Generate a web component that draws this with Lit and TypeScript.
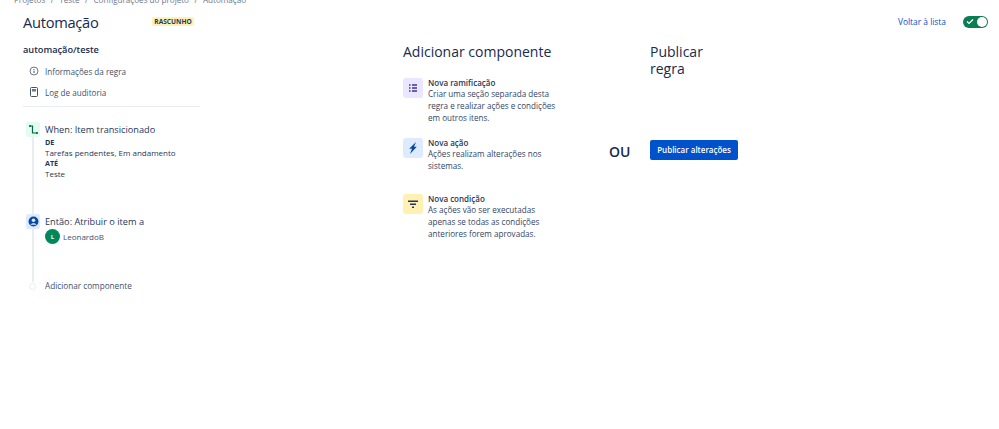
import { LitElement, html, css } from "lit";
import { customElement } from "lit/decorators.js";

@customElement("app-root")
export class AppRoot extends LitElement {
  static styles = css`
    :host { display: block; width: 999px; height: 429px; overflow: hidden; background: #fff; font-family: "Open Sans", "Noto Sans", sans-serif; color: #172b4d; font-size: 9px; }
    * { box-sizing: border-box; }
    .crumbs { display: flex; gap: 5.5px; margin: -6px 0 0 14px; height: 11px; line-height: 11px; font-size: 8.1px; color: #6b778c; white-space: nowrap; }
    .head { display: flex; align-items: center; height: 32px; padding: 0 11px 0 23px; margin-top: 1px; }
    h1 { margin: 0; width: 129px; font-size: 14.7px; font-weight: 400; letter-spacing: -0.3px; line-height: 22px; color: #172b4d; }
    .badge { background: #fff0b3; color: #253858; font-size: 6.6px; font-weight: 700; line-height: 9px; height: 9px; border-radius: 2px; margin-top: -2px; width: 42px; text-align: center; white-space: nowrap; }
    .back { margin-left: auto; color: #0052cc; font-size: 8.4px; margin-right: 17px; margin-top: -1px; }
    .toggle { width: 25px; height: 12px; border-radius: 6px; background: #0a7d55; display: flex; align-items: center; justify-content: space-between; padding: 0 1px 0 3px; margin-top: -1px; }
    .toggle i { width: 10px; height: 10px; background: #fff; border-radius: 50%; display: block; }
    .body { display: flex; padding-left: 23px; }
    .left { width: 177px; margin-right: 203px; }
    .name { font-size: 9.2px; font-weight: 600; line-height: 14px; margin-top: 5px; margin-bottom: 7px; }
    .menu { display: flex; align-items: center; gap: 6px; height: 14px; margin: 0 0 7px 6px; color: #42526e; font-size: 8.1px; }
    .menu svg { width: 10px; height: 10px; flex: none; }
    .rule { height: 1px; background: #ebecf0; margin: 3px 0 15px; }
    .flow { position: relative; }
    .line { position: absolute; left: 9px; top: 10px; width: 2px; height: 150px; background: #ebecf0; }
    .step { position: relative; display: flex; gap: 5px; }
    .ico { width: 14px; height: 15px; border-radius: 2px; margin-left: 3px; flex: none; display: flex; align-items: center; justify-content: center; }
    .ico svg { width: 11px; height: 11px; }
    .green { background: #e3fcef; }
    .blue { background: #deebff; }
    .st { font-size: 9.2px; line-height: 15px; color: #253858; white-space: nowrap; }
    .det { font-size: 8px; line-height: 10.7px; color: #253858; white-space: nowrap; }
    .det b { font-size: 7.2px; font-weight: 700; display: block; }
    .s1 { height: 92px; }
    .s2 { height: 66px; }
    .user { display: flex; align-items: center; gap: 3px; font-size: 8px; color: #42526e; }
    .av { width: 15px; height: 15px; border-radius: 50%; background: #00875a; color: #fff; font-size: 6px; font-weight: 700; display: flex; align-items: center; justify-content: center; flex: none; }
    .dot { width: 7px; height: 7px; border-radius: 50%; background: #fff; border: 1px solid #ebecf0; margin: 2.5px 4px 0 6px; flex: none; }
    .add { font-size: 8.2px; line-height: 12px; color: #42526e; }
    .mid { width: 155px; margin-top: 6px; margin-right: 92px; }
    h2 { margin: 0; font-size: 14px; font-weight: 500; line-height: 16.5px; color: #172b4d; white-space: nowrap; }
    .opts { margin-top: 17px; display: flex; flex-direction: column; }
    .opt { display: flex; gap: 5px; }
    .o1 { height: 60px; }
    .o2 { height: 56px; }
    .sq { width: 20px; height: 20px; border-radius: 3px; flex: none; display: flex; align-items: center; justify-content: center; }
    .sq svg { width: 14px; height: 14px; }
    .purple { background: #eae6ff; }
    .sky { background: #deebff; }
    .yellow { background: #fff0b3; }
    .t { font-size: 8px; font-weight: 600; line-height: 11px; margin-top: -0.5px; color: #253858; }
    .d { font-size: 8.1px; line-height: 12.2px; color: #344563; white-space: nowrap; }
    .pub { width: 100px; margin-top: 6px; }
    .ou { position: absolute; left: 609px; top: 143px; font-size: 14px; font-weight: 600; line-height: 17px; color: #172b4d; }
    .btn { display: flex; align-items: center; justify-content: center; width: 88px; height: 20px; margin-top: 63px; background: #0052cc; color: #fff; border-radius: 2px; font-size: 8px; font-weight: 600; white-space: nowrap; padding-bottom: 2px; }
  `;

  render() {
    return html`
      <div class="crumbs"><span>Projetos</span><span>/</span><span>Teste</span><span>/</span><span>Configurações do projeto</span><span>/</span><span>Automação</span></div>
      <div class="head">
        <h1>Automação</h1>
        <div class="badge">RASCUNHO</div>
        <div class="back">Voltar à lista</div>
        <div class="toggle">
          <svg width="8" height="7" viewBox="0 0 8 7"><path d="M1 3.5l2 2 4-4" fill="none" stroke="#fff" stroke-width="1.2"/></svg>
          <i></i>
        </div>
      </div>
      <div class="body">
        <div class="left">
          <div class="name">automação/teste</div>
          <div class="menu">
            <svg viewBox="0 0 10 10"><circle cx="5" cy="5" r="4" fill="none" stroke="#6b778c" stroke-width="1"/><path d="M5 4.6v2.4M5 3v.9" stroke="#42526e" stroke-width="1"/></svg>
            <span>Informações da regra</span>
          </div>
          <div class="menu">
            <svg viewBox="0 0 10 10"><rect x="1.5" y="0.5" width="7" height="9" rx="1" fill="none" stroke="#42526e" stroke-width="1"/><rect x="3" y="2" width="4" height="2.5" fill="#6b778c"/></svg>
            <span>Log de auditoria</span>
          </div>
          <div class="rule"></div>
          <div class="flow">
            <div class="line"></div>
            <div class="step s1">
              <div class="ico green"><svg viewBox="0 0 11 11"><path d="M2 2h2.5v7H9" fill="none" stroke="#006644" stroke-width="1.2"/><circle cx="2" cy="2" r="1.1" fill="#006644"/><circle cx="9" cy="9" r="1.1" fill="#006644"/></svg></div>
              <div>
                <div class="st">When: Item transicionado</div>
                <div class="det"><b>DE</b>Tarefas pendentes, Em andamento<b>ATÉ</b>Teste</div>
              </div>
            </div>
            <div class="step s2">
              <div class="ico blue"><svg viewBox="0 0 10 10"><circle cx="5" cy="5" r="4.5" fill="#0747a6"/><circle cx="5" cy="3.8" r="1.6" fill="#deebff"/><path d="M2.2 8c.6-2 5-2 5.6 0z" fill="#deebff"/></svg></div>
              <div>
                <div class="st">Então: Atribuir o item a</div>
                <div class="user"><div class="av">L</div><span>LeonardoB</span></div>
              </div>
            </div>
            <div class="step">
              <div class="dot"></div>
              <div class="add">Adicionar componente</div>
            </div>
          </div>
        </div>
        <div class="mid">
          <h2>Adicionar componente</h2>
          <div class="opts">
            <div class="opt o1">
              <div class="sq purple"><svg viewBox="0 0 14 14"><path d="M3 4h1.5M3 7h1.5M3 10h1.5M6 4h5M6 7h5M6 10h5" stroke="#403294" stroke-width="1.4"/></svg></div>
              <div><div class="t">Nova ramificação</div><div class="d">Criar uma seção separada desta<br>regra e realizar ações e condições<br>em outros itens.</div></div>
            </div>
            <div class="opt o2">
              <div class="sq sky"><svg viewBox="0 0 14 14"><path d="M10 1L3.2 7.8h2.8L4 13l6.8-7.2H8z" fill="#0747a6"/></svg></div>
              <div><div class="t">Nova ação</div><div class="d">Ações realizam alterações nos<br>sistemas.</div></div>
            </div>
            <div class="opt">
              <div class="sq yellow"><svg viewBox="0 0 14 14"><path d="M2 4.2h10M4 7.2h6M6 10.2h2" stroke="#253858" stroke-width="1.5"/></svg></div>
              <div><div class="t">Nova condição</div><div class="d">As ações vão ser executadas<br>apenas se todas as condições<br>anteriores forem aprovadas.</div></div>
            </div>
          </div>
        </div>
        <div class="pub">
          <h2>Publicar<br>regra</h2>
          <div class="btn">Publicar alterações</div>
        </div>
        <div class="ou">OU</div>
      </div>
    `;
  }
}
